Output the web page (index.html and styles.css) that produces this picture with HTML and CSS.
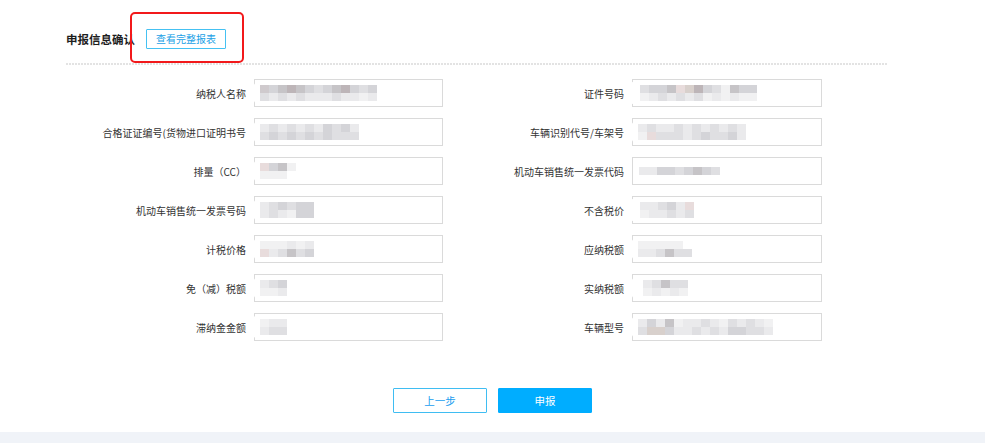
FILE: index.html
```html
<!DOCTYPE html>
<html lang="zh-CN">
<head>
<meta charset="utf-8">
<title>申报信息确认</title>
<link rel="stylesheet" href="styles.css">
</head>
<body>
<div class="page">
  <div class="head">
    <h2 class="title">申报信息确认</h2>
    <div class="view-wrap">
      <button class="view-btn">查看完整报表</button>
      <span class="annot"></span>
    </div>
  </div>
  <div class="divider"></div>

  <div class="form">
    <div class="field">
      <span class="label">纳税人名称</span>
      <div class="box"><div class="mask m-l1"><div class="pix"><i class="a"></i><i class="d"></i><i class="c"></i><i class="e"></i><i class="b"></i><i class="d"></i><i class="g"></i><i class="e"></i><i class="b"></i><i class="d"></i><i class="c"></i><i class="e"></i><i class="d"></i><i class="e"></i><i class="c"></i><i class="e"></i><i class="b"></i><i class="d"></i><i class="g"></i><i class="e"></i><i class="c"></i><i class="e"></i><i class="d"></i><i class="f"></i><i class="c"></i><i class="e"></i></div></div></div>
    </div>
    <div class="field">
      <span class="label">证件号码</span>
      <div class="box"><div class="mask m-r1"><div class="pix"><i class="d"></i><i class="f"></i><i class="c"></i><i class="e"></i><i class="c"></i><i class="d"></i><i class="b"></i><i class="e"></i><i class="h"></i><i class="d"></i><i class="k"></i><i class="e"></i><i class="g"></i><i class="d"></i><i class="c"></i><i class="f"></i><i class="d"></i><i class="e"></i><i class="f"></i><i class="f"></i><i class="b"></i><i class="e"></i><i class="c"></i><i class="f"></i><i class="c"></i><i class="f"></i></div></div></div>
    </div>

    <div class="field">
      <span class="label">合格证证编号(货物进口证明书号</span>
      <div class="box"><div class="mask m-l2"><div class="pix"><i class="e"></i><i class="d"></i><i class="d"></i><i class="c"></i><i class="e"></i><i class="d"></i><i class="d"></i><i class="c"></i><i class="e"></i><i class="d"></i><i class="d"></i><i class="c"></i><i class="e"></i><i class="d"></i><i class="c"></i><i class="c"></i><i class="d"></i><i class="d"></i><i class="c"></i><i class="d"></i><i class="e"></i><i class="d"></i></div></div></div>
    </div>
    <div class="field">
      <span class="label">车辆识别代号/车架号</span>
      <div class="box"><div class="mask m-r2"><div class="pix"><i class="e"></i><i class="f"></i><i class="d"></i><i class="h"></i><i class="e"></i><i class="d"></i><i class="e"></i><i class="d"></i><i class="d"></i><i class="d"></i><i class="e"></i><i class="e"></i><i class="d"></i><i class="d"></i><i class="e"></i><i class="c"></i><i class="d"></i><i class="d"></i><i class="e"></i><i class="d"></i><i class="d"></i><i class="c"></i><i class="e"></i><i class="e"></i></div></div></div>
    </div>

    <div class="field">
      <span class="label">排量（CC）</span>
      <div class="box"><div class="mask m-l3"><div class="pix"><i class="h"></i><i class="f"></i><i class="c"></i><i class="f"></i><i class="b"></i><i class="f"></i><i class="f"></i><i class="w"></i></div></div></div>
    </div>
    <div class="field">
      <span class="label">机动车销售统一发票代码</span>
      <div class="box"><div class="mask m-r3"><div class="pix one"><i class="e"></i><i class="e"></i><i class="c"></i><i class="c"></i><i class="d"></i><i class="c"></i><i class="b"></i><i class="c"></i><i class="d"></i></div></div></div>
    </div>

    <div class="field">
      <span class="label">机动车销售统一发票号码</span>
      <div class="box"><div class="mask m-l4"><div class="pix"><i class="e"></i><i class="e"></i><i class="d"></i><i class="d"></i><i class="c"></i><i class="e"></i><i class="d"></i><i class="f"></i><i class="c"></i><i class="c"></i><i class="c"></i><i class="c"></i></div></div></div>
    </div>
    <div class="field">
      <span class="label">不含税价</span>
      <div class="box"><div class="mask m-r4"><div class="pix"><i class="e"></i><i class="f"></i><i class="e"></i><i class="e"></i><i class="d"></i><i class="e"></i><i class="c"></i><i class="d"></i><i class="e"></i><i class="e"></i><i class="h"></i><i class="d"></i></div></div></div>
    </div>

    <div class="field">
      <span class="label">计税价格</span>
      <div class="box"><div class="mask m-l5"><div class="pix"><i class="f"></i><i class="h"></i><i class="f"></i><i class="e"></i><i class="f"></i><i class="d"></i><i class="e"></i><i class="b"></i><i class="f"></i><i class="d"></i><i class="e"></i><i class="c"></i></div></div></div>
    </div>
    <div class="field">
      <span class="label">应纳税额</span>
      <div class="box"><div class="mask m-r5"><div class="pix"><i class="f"></i><i class="e"></i><i class="f"></i><i class="e"></i><i class="f"></i><i class="d"></i><i class="f"></i><i class="b"></i><i class="f"></i><i class="d"></i><i class="w"></i><i class="d"></i></div></div></div>
    </div>

    <div class="field">
      <span class="label">免（减）税额</span>
      <div class="box"><div class="mask m-l6"><div class="pix"><i class="e"></i><i class="f"></i><i class="d"></i><i class="f"></i><i class="c"></i><i class="e"></i></div></div></div>
    </div>
    <div class="field">
      <span class="label">实纳税额</span>
      <div class="box"><div class="mask m-r6"><div class="pix"><i class="e"></i><i class="f"></i><i class="d"></i><i class="e"></i><i class="b"></i><i class="f"></i><i class="d"></i><i class="e"></i><i class="d"></i><i class="f"></i></div></div></div>
    </div>

    <div class="field">
      <span class="label">滞纳金金额</span>
      <div class="box"><div class="mask m-l7"><div class="pix"><i class="f"></i><i class="e"></i><i class="e"></i><i class="d"></i><i class="e"></i><i class="d"></i></div></div></div>
    </div>
    <div class="field">
      <span class="label">车辆型号</span>
      <div class="box"><div class="mask m-r7"><div class="pix"><i class="e"></i><i class="d"></i><i class="c"></i><i class="k"></i><i class="e"></i><i class="k"></i><i class="b"></i><i class="c"></i><i class="f"></i><i class="e"></i><i class="e"></i><i class="e"></i><i class="e"></i><i class="d"></i><i class="d"></i><i class="e"></i><i class="e"></i><i class="d"></i><i class="f"></i><i class="e"></i><i class="d"></i><i class="c"></i><i class="e"></i><i class="c"></i><i class="d"></i><i class="d"></i><i class="e"></i><i class="d"></i><i class="f"></i><i class="e"></i></div></div></div>
    </div>
  </div>

  <div class="actions">
    <button class="btn btn-prev">上一步</button>
    <button class="btn btn-submit">申报</button>
  </div>
</div>
<div class="footer-band"></div>
</body>
</html>
```

FILE: styles.css
```css
html, body {
  margin: 0;
  padding: 0;
  background: #ffffff;
}
body {
  font-family: "Noto Sans CJK SC", "Noto Sans", "Liberation Sans", sans-serif;
  color: #333333;
  width: 985px;
  height: 443px;
  overflow: hidden;
  display: flex;
  flex-direction: column;
}
.page {
  flex: 1;
  padding-left: 66px;
}
.head {
  display: flex;
  align-items: center;
  margin-top: 29px;
  height: 20px;
}
.title {
  margin: 0;
  font-size: 11.5px;
  font-weight: 700;
  color: #1e1e1e;
  line-height: 20px;
}
.view-wrap {
  position: relative;
  margin-left: 11px;
}
.view-btn {
  display: block;
  box-sizing: border-box;
  width: 80px;
  height: 20px;
  padding: 0;
  border: 1px solid #45c1f2;
  border-radius: 1px;
  background: #ffffff;
  color: #1a9fe6;
  font-family: inherit;
  font-size: 10px;
  line-height: 18px;
}
.annot {
  position: absolute;
  left: -16px;
  top: -17px;
  width: 114px;
  height: 51px;
  box-sizing: border-box;
  border: 2px solid #f2191b;
  border-radius: 5px;
}
.divider {
  margin-top: 14px;
  width: 822px;
  height: 2px;
  background: repeating-linear-gradient(90deg, #e3e3e3 0 2px, transparent 2px 3px);
}
.form {
  margin-top: 14px;
  display: grid;
  grid-template-columns: 377px 379px;
  grid-auto-rows: 28px;
  row-gap: 11px;
}
.field {
  display: flex;
  align-items: center;
}
.label {
  flex: 1;
  text-align: right;
  font-size: 10px;
  color: #333333;
  white-space: nowrap;
  margin-right: 8px;
}
.box {
  position: relative;
  box-sizing: border-box;
  width: 189px;
  height: 28px;
  border: 1px solid #dadada;
  background: #ffffff;
}
.field:nth-child(2n) .box {
  width: 190px;
}
.mask {
  position: absolute;
  top: 2px;
  bottom: 2px;
  left: -2px;
  background: #ffffff;
  border-radius: 6px;
  display: flex;
  align-items: center;
  padding-left: 7px;
  box-sizing: border-box;
}
.pix {
  display: grid;
  grid-auto-flow: column;
  grid-template-rows: 8px 8px;
  grid-auto-columns: 9px;
  filter: blur(0.4px);
}
.pix.one {
  grid-template-rows: 8px;
}
.pix i { display: block; }
.pix .a { background: #cfcacd; }
.pix .b { background: #c6c4c7; }
.pix .c { background: #d4d4d8; }
.pix .d { background: #dfdfe2; }
.pix .e { background: #eaeaec; }
.pix .f { background: #f1f1f2; }
.pix .g { background: #bdb5b8; }
.pix .h { background: #e8dcdc; }
.pix .k { background: #d8d0cc; }
.pix .w { background: #ffffff; }

/* white blur masks, widths per field */
.m-l1 { width: 160px; }
.m-l2 { width: 140px; }
.m-l3 { width: 70px; }
.m-l4 { width: 72px; }
.m-l5 { width: 68px; }
.m-l6 { width: 52px; }
.m-l7 { width: 50px; left: -4px; padding-left: 9px; }
.m-r1 { width: 162px; left: -6px; padding-left: 13px; }
.m-r2 { width: 136px; }
.m-r3 { width: 124px; left: 1px; padding-left: 5px; }
.m-r4 { width: 88px; left: -6px; padding-left: 13px; }
.m-r5 { width: 68px; }
.m-r6 { width: 64px; padding-left: 12px; }
.m-r7 { width: 170px; }

.actions {
  display: flex;
  justify-content: center;
  gap: 11px;
  margin-top: 47px;
  margin-left: -66px;
}
.btn {
  box-sizing: border-box;
  width: 94px;
  height: 25px;
  padding: 0;
  font-family: inherit;
  font-size: 10.5px;
  border-radius: 1px;
}
.btn-prev {
  border: 1px solid #3fbdf2;
  background: #ffffff;
  color: #1b9def;
}
.btn-submit {
  border: 1px solid #00adff;
  background: #00adff;
  color: #ffffff;
}
.footer-band {
  height: 11px;
  background: #f0f3f8;
}
```
